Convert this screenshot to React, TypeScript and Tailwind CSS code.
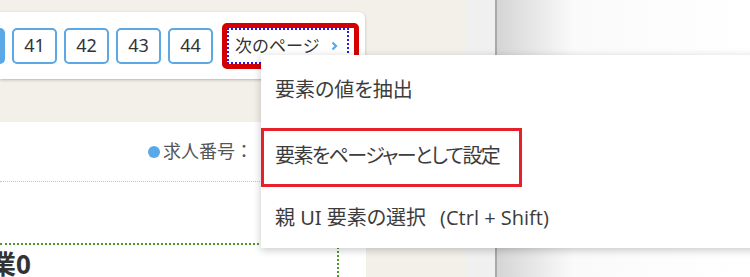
import React from "react";

const pages = ["41", "42", "43", "44"];

function PageButton({ label }: { label: string }) {
  return (
    <div className="w-[45px] h-[36px] shrink-0 flex items-center justify-center rounded-[5px] border-2 border-[#5ba8e5] bg-white text-[18px] text-[#333]">
      {label}
    </div>
  );
}

export default function App() {
  return (
    <div className="relative w-[750px] h-[277px] overflow-hidden flex font-['Noto_Sans','Noto_Sans_CJK_JP',sans-serif]">
      {/* page behind */}
      <div className="w-[465px] shrink-0 bg-[#f3efe9] flex flex-col">
        {/* pager card */}
        <div className="mt-[12px] w-[365px] h-[70px] bg-white rounded-r-[6px] shadow-[0_1px_3px_rgba(0,0,0,0.25)] flex items-center gap-[7px]">
          <div className="w-[45px] h-[36px] shrink-0 -ml-[40px] rounded-[5px] bg-[#5aa9e6]" />
          {pages.map((p) => (
            <PageButton key={p} label={p} />
          ))}
          <div className="ml-[2px] w-[137px] h-[46px] shrink-0 rounded-[5px] border-[5px] border-[#d40000] bg-white flex">
            <div className="w-[122px] h-[36px] border-2 border-dotted border-[#1c1cff] flex items-center pl-[6px] text-[17px] text-[#333]">
              <span className="leading-none">次のページ</span>
              <svg width="7" height="10" viewBox="0 0 7 10" className="ml-[11px]">
                <path d="M1.5 1.5 L5 5 L1.5 8.5" fill="none" stroke="#5aa9e6" strokeWidth="2.2" />
              </svg>
            </div>
          </div>
        </div>

        {/* content */}
        <div className="mt-[43px] w-[366px] flex-1 bg-white flex flex-col">
          <div className="h-[60px] border-b border-dotted border-[#c4c4c4] flex items-center pl-[148px] text-[18px] text-[#555]">
            <span className="w-[12px] h-[12px] rounded-full bg-[#5aa9e6] mr-[3px]" />
            <span className="whitespace-nowrap">求人番号：</span>
          </div>
          <div className="mt-[61px] w-[339px] flex-1 border-t-2 border-r-2 border-dotted border-[#4b9a2b] pt-[6px] overflow-hidden">
            <div className="-ml-[10px] text-[26px] font-bold leading-none text-[#333] whitespace-nowrap">業0</div>
          </div>
        </div>
      </div>
      <div className="w-[30px] shrink-0 bg-[#f0f0f0]" />
      <div className="w-[2px] shrink-0 bg-[#a9a9a9]" />
      <div className="flex-1 bg-gradient-to-r from-[#d5d5d5] via-[#fafafa] via-30% to-white" />

      {/* context menu */}
      <div className="absolute left-[261px] top-[55px] w-[520px] h-[193px] bg-white shadow-[0_2px_8px_rgba(0,0,0,0.22)] flex flex-col text-[20px] text-[#3c3c3c] [font-feature-settings:'palt'] whitespace-nowrap">
        <div className="h-[70px] flex items-center pl-[14px]">要素の値を抽出</div>
        <div className="mt-[3px] w-[261px] h-[59px] border-[3px] border-[#e8202a] flex items-center pl-[11px] pb-[4px] tracking-[-1.6px]">
          要素をページャーとして設定
        </div>
        <div className="h-[61px] flex items-center pl-[14px]">
          親 UI 要素の選択
          <span className="ml-[14px] font-['Open_Sans',sans-serif]">(Ctrl + Shift)</span>
        </div>
      </div>
    </div>
  );
}
